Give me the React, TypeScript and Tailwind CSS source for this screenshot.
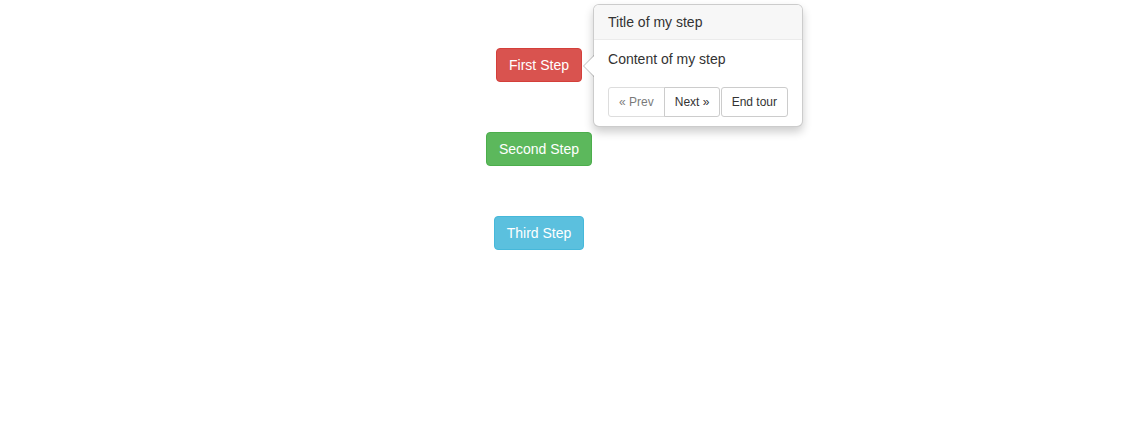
export default function App() {
  return (
    <div className="w-[1143px] h-[435px] bg-white text-[14px] leading-[20px] text-[#333] font-['Liberation_Sans',Arial,sans-serif]">
      <div className="w-[1078px] pt-[48px] flex flex-col items-center gap-[50px]">
        <div className="relative">
          <button className="h-[34px] px-[12px] rounded-[4px] border border-[#d43f3a] bg-[#d9534f] text-white">
            First Step
          </button>

          {/* tour popover */}
          <div className="absolute left-[97px] top-[-44px] w-[210px] bg-white border border-black/20 rounded-[6px] shadow-[0_5px_10px_rgba(0,0,0,0.2)] z-10">
            <div className="absolute left-[-11px] top-[50px] w-0 h-0 border-y-[11px] border-y-transparent border-r-[11px] border-r-black/25" />
            <div className="absolute left-[-10px] top-[51px] w-0 h-0 border-y-[10px] border-y-transparent border-r-[10px] border-r-white" />
            <h3 className="px-[14px] py-[7px] bg-[#f7f7f7] border-b border-[#ebebeb] rounded-t-[5px]">
              Title of my step
            </h3>
            <div className="px-[14px] py-[9px]">Content of my step</div>
            <div className="px-[14px] pt-[9px] pb-[9px] flex">
              <div className="flex">
                <button
                  disabled
                  className="h-[30px] px-[10px] text-[12px] border border-[#ccc] rounded-l-[3px] opacity-65 text-[#333]"
                >
                  « Prev
                </button>
                <button className="h-[30px] px-[10px] text-[12px] border border-[#ccc] -ml-px rounded-r-[3px]">
                  Next »
                </button>
              </div>
              <button className="ml-auto h-[30px] px-[10px] text-[12px] border border-[#ccc] rounded-[3px]">
                End tour
              </button>
            </div>
          </div>
        </div>
        <button className="h-[34px] px-[12px] rounded-[4px] border border-[#4cae4c] bg-[#5cb85c] text-white">
          Second Step
        </button>
        <button className="h-[34px] px-[12px] rounded-[4px] border border-[#46b8da] bg-[#5bc0de] text-white">
          Third Step
        </button>
      </div>
    </div>
  );
}
